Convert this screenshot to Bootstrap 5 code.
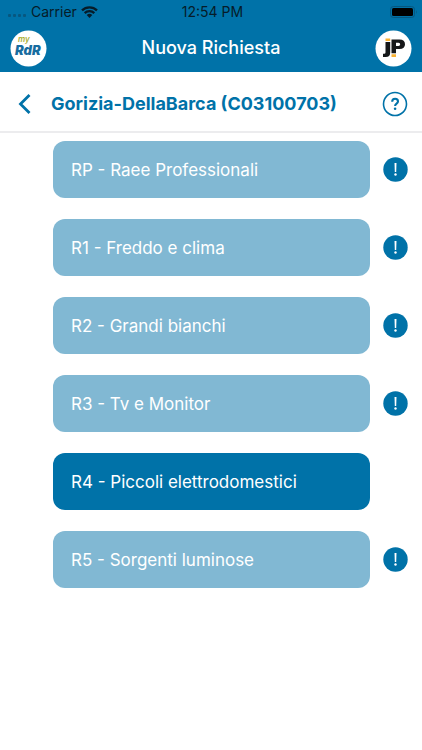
<!DOCTYPE html>
<html lang="it">
<head>
<meta charset="utf-8">
<meta name="viewport" content="width=device-width, initial-scale=1">
<title>Nuova Richiesta</title>
<link href="https://cdn.jsdelivr.net/npm/bootstrap@5.3.0/dist/css/bootstrap.min.css" rel="stylesheet">
<style>
:root { --brand: #0072a8; --brand-soft: #81b8d3; --ink: #061c29; }
body { font-family: Inter, "Liberation Sans", sans-serif; background: #fff; }
.app-top { background: var(--brand); }
.status-bar { height: 24px; color: var(--ink); font-size: 14px; line-height: 24px; padding: 0 4px 0 7px; }
.title-bar { height: 48px; padding: 0 10px; }
.title-bar h1 { font-size: 18px; line-height: 24px; font-weight: 500; }
.place-bar { height: 61px; padding: 4px 14px 0 16px; border-bottom: 2px solid #ececee; color: var(--brand); }
.place-bar h2 { font-size: 18px; line-height: 24px; font-weight: 700; }
.plain-btn { color: var(--brand); line-height: 0; }
.place-bar .back-btn { width: 35px; text-align: left; }
.request-list { padding: 8px 14px 24px 53px; gap: 21px; }
.request-item { gap: 13px; padding-right: 38px; }
.request-item.has-alert { padding-right: 0; }
.request-btn { height: 57px; border-radius: 12px; padding: 0 18px; font-size: 17px; line-height: 24px; color: #fff; background: var(--brand-soft); }
.request-btn:hover { color: #fff; background: var(--brand); }
.request-btn.chosen { background: var(--brand); color: #fff; }
</style>
</head>
<body>
<header class="app-top">
  <div class="status-bar row g-0 align-items-center">
    <div class="col d-flex align-items-center gap-1">
      <svg width="20" height="24" viewBox="0 0 20 24" aria-hidden="true"><g fill="#07577f"><rect x="1" y="14" width="3" height="3" rx="1"/><rect x="6" y="14" width="3" height="3" rx="1"/><rect x="11" y="14" width="3" height="3" rx="1"/><rect x="16" y="14" width="3" height="3" rx="1"/></g></svg>
      <span>Carrier</span>
      <svg width="17" height="12" viewBox="0 0 17 12" aria-label="Wi-Fi"><g fill="none" stroke="#061c29" stroke-width="2.3"><path d="M1 4.4A10.7 10.7 0 0 1 16 4.4"/><path d="M3.7 7.1a6.8 6.8 0 0 1 9.6 0"/></g><path d="M5.7 9.1a4 4 0 0 1 5.6 0L8.500 12z" fill="#061c29"/></svg>
    </div>
    <div class="col-auto">12:54 PM</div>
    <div class="col d-flex justify-content-end">
      <svg width="28" height="12" viewBox="0 0 28 12" aria-label="Batteria"><rect x=".5" y=".5" width="24" height="11" rx="3" fill="none" stroke="#07577f"/><rect x="2" y="2" width="21" height="8" rx="1.500" fill="#000"/><path d="M26 4q1.500 2 0 4z" fill="#07577f"/></svg>
    </div>
  </div>
  <div class="title-bar d-flex align-items-center justify-content-between">
    <svg width="37" height="37" viewBox="0 0 37 37" role="img" aria-label="my RdR"><circle cx="18.500" cy="18.500" r="18" fill="#fff"/><text x="8" y="12" font-family="Inter, sans-serif" font-size="8" font-style="italic" font-weight="600" fill="#a9ae35">my</text><text x="5" y="25" font-family="Inter, sans-serif" font-size="13" font-style="italic" font-weight="900" fill="#176c9f">RdR</text></svg>
    <h1 class="m-0 text-white">Nuova Richiesta</h1>
    <svg width="37" height="37" viewBox="0 0 37 37" role="img" aria-label="jP"><circle cx="18.500" cy="18.500" r="18" fill="#fff"/><path d="M10.500 12h4.700v10.500q0 4.500-4.500 4.500H8v-3.200h1.200q1.300 0 1.300-1.300z" fill="#151719"/><path fill-rule="evenodd" d="M16.500 9.500h8q5.500 0 5.500 4.700T24.500 19H21v4.300h-4.500zM21 12.700v3.200h2.500q1.700 0 1.700-1.600t-1.700-1.600z" fill="#151719"/><path d="M10.500 8.500h4.700V11h-4.700zM16.500 24.300h4.500V27h-4.500z" fill="#f9b233"/></svg>
  </div>
</header>
<div class="place-bar d-flex align-items-center">
  <button type="button" class="btn plain-btn back-btn border-0 p-0" aria-label="Indietro"><svg width="18" height="24" viewBox="0 0 18 24"><path d="M13.500 3L4.500 12l9 9" fill="none" stroke="currentColor" stroke-width="2.800"/></svg></button>
  <h2 class="m-0 flex-grow-1 text-nowrap">Gorizia-DellaBarca (C03100703)</h2>
  <button type="button" class="btn plain-btn border-0 p-0" aria-label="Aiuto"><svg width="26" height="26" viewBox="0 0 26 26"><circle cx="13" cy="13" r="11.500" fill="none" stroke="currentColor" stroke-width="1.600"/><path d="M10.200 10.700c0-1.800 1.200-2.900 2.900-2.900s2.900 1 2.900 2.600c0 2.300-2.900 2-2.900 4.500" fill="none" stroke="currentColor" stroke-width="2.100"/><circle cx="13.100" cy="17.700" r="1.300" fill="currentColor"/></svg></button>
</div>
<svg class="d-none" aria-hidden="true"><symbol id="alert" viewBox="0 0 25 25"><circle cx="12.500" cy="12.500" r="12.200" fill="currentColor"/><path d="M11.500 6h2l-.3 9h-1.400z" fill="#fff"/><circle cx="12.500" cy="17.500" r="1.200" fill="#fff"/></symbol></svg>
<main>
  <ul class="request-list list-unstyled m-0 d-flex flex-column">
    <li class="request-item has-alert d-flex align-items-center"><button type="button" class="btn request-btn border-0 flex-grow-1 text-start">RP - Raee Professionali</button><button type="button" class="btn plain-btn border-0 p-0" aria-label="Avviso RP"><svg width="25" height="25"><use href="#alert"/></svg></button></li>
    <li class="request-item has-alert d-flex align-items-center"><button type="button" class="btn request-btn border-0 flex-grow-1 text-start">R1 - Freddo e clima</button><button type="button" class="btn plain-btn border-0 p-0" aria-label="Avviso R1"><svg width="25" height="25"><use href="#alert"/></svg></button></li>
    <li class="request-item has-alert d-flex align-items-center"><button type="button" class="btn request-btn border-0 flex-grow-1 text-start">R2 - Grandi bianchi</button><button type="button" class="btn plain-btn border-0 p-0" aria-label="Avviso R2"><svg width="25" height="25"><use href="#alert"/></svg></button></li>
    <li class="request-item has-alert d-flex align-items-center"><button type="button" class="btn request-btn border-0 flex-grow-1 text-start">R3 - Tv e Monitor</button><button type="button" class="btn plain-btn border-0 p-0" aria-label="Avviso R3"><svg width="25" height="25"><use href="#alert"/></svg></button></li>
    <li class="request-item d-flex align-items-center"><button type="button" class="btn request-btn chosen border-0 flex-grow-1 text-start">R4 - Piccoli elettrodomestici</button></li>
    <li class="request-item has-alert d-flex align-items-center"><button type="button" class="btn request-btn border-0 flex-grow-1 text-start">R5 - Sorgenti luminose</button><button type="button" class="btn plain-btn border-0 p-0" aria-label="Avviso R5"><svg width="25" height="25"><use href="#alert"/></svg></button></li>
  </ul>
</main>
<script src="https://cdn.jsdelivr.net/npm/bootstrap@5.3.0/dist/js/bootstrap.bundle.min.js"></script>
</body>
</html>
